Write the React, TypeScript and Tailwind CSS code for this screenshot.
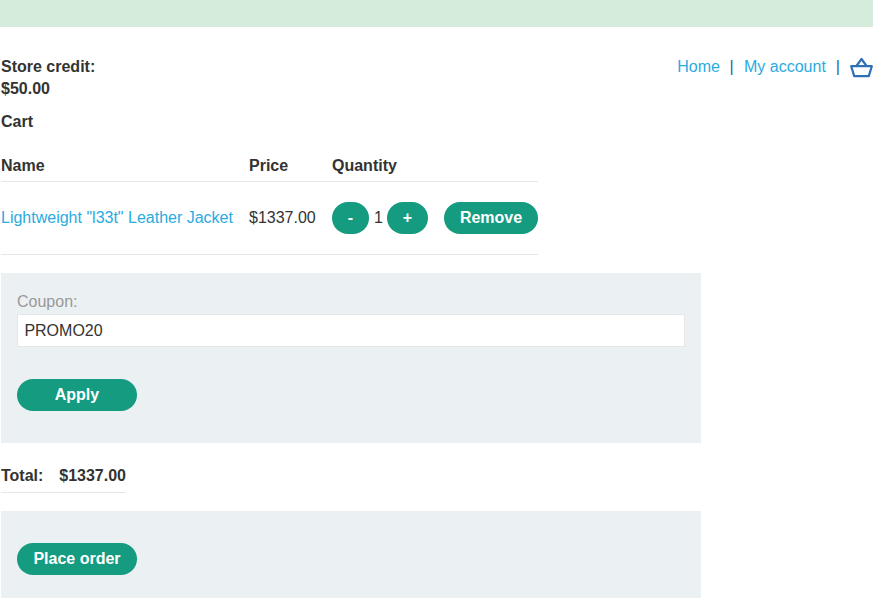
const btn = "h-8 rounded-[25px] bg-[#159b80] text-white font-bold flex items-center justify-center";

const BasketIcon = () => (
  <svg width="23" height="21" viewBox="0 0 23 21" fill="none" stroke="#2f6fb5" strokeWidth="2.2" strokeLinejoin="round" strokeLinecap="round">
    <path d="M1.2 9.2h20.6l-3 9.9H4.2zM6.3 9.2L11.5 2l5.2 7.2" />
  </svg>
);

export default function App() {
  return (
    <div className="h-[598px] overflow-hidden bg-white text-[#333332] text-base font-['Liberation_Sans',Arial,sans-serif]">
      <div className="h-[27px] bg-[#d5ebdb]" />

      <div className="pl-px">
        <div className="flex justify-between pt-[28px]">
          <div className="font-bold leading-[22px] pt-px">
            <p>Store credit:</p>
            <p>$50.00</p>
          </div>
          <nav className="flex items-center h-5 mt-[2px]">
            <a className="text-[#29abe2]">Home</a>
            <span className="ml-[9.5px] mr-[10.5px] text-[#1f5fa8]">|</span>
            <a className="text-[#29abe2]">My account</a>
            <span className="ml-[10px] mr-[10px] text-[#1f5fa8]">|</span>
            <BasketIcon />
          </nav>
        </div>

        <p className="font-bold leading-[22px] mt-[11px]">Cart</p>

        <div className="w-[537px] mt-[22px] grid grid-cols-[248px_83px_1fr]">
          <div className="font-bold leading-[22px] h-[27px] border-b border-[#e6e6e6] col-span-3 grid grid-cols-subgrid">
            <span>Name</span>
            <span>Price</span>
            <span>Quantity</span>
          </div>
          <div className="h-[73px] border-b border-[#e6e6e6] col-span-3 grid grid-cols-subgrid items-center">
            <a className="text-[#29abe2] -mt-[1px]">Lightweight "l33t" Leather Jacket</a>
            <span className="-mt-[1px]">$1337.00</span>
            <div className="flex items-center justify-between -mt-[1px]">
              <div className="flex items-center">
                <button className={`${btn} w-[37px]`}>-</button>
                <span className="ml-[5px] mr-[4px]">1</span>
                <button className={`${btn} w-[41px]`}>+</button>
              </div>
              <button className={`${btn} w-[94px]`}>Remove</button>
            </div>
          </div>
        </div>

        <section className="w-[700px] h-[170px] mt-[18px] bg-[#ebf0f2] px-4 pt-[18px]">
          <label className="block leading-[20px] text-[#999999] pt-px h-[20px]">Coupon:</label>
          <input
            readOnly
            value="PROMO20"
            className="block w-full h-[33px] mt-[3px] px-[6.4px] bg-white border border-[#e6e6e6] outline-none"
          />
          <button className={`${btn} w-[120px] mt-8`}>Apply</button>
        </section>

        <div className="w-[125px] h-[50px] flex font-bold items-center justify-between border-b border-[#e6e6e6] pt-[16px]">
          <span>Total:</span>
          <span>$1337.00</span>
        </div>

        <section className="w-[700px] h-[87px] mt-[18px] bg-[#ebf0f2] px-4 pt-8">
          <button className={`${btn} w-[120px]`}>Place order</button>
        </section>
      </div>
    </div>
  );
}
